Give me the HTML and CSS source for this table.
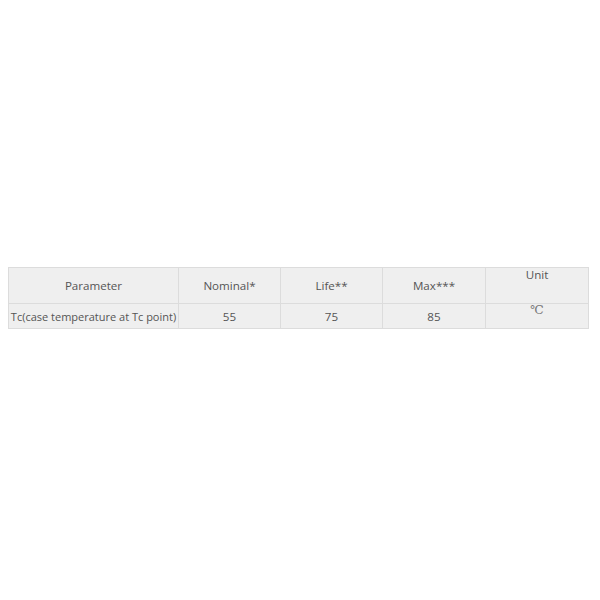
FILE: index.html
```html
<!DOCTYPE html>
<html>
<head>
<meta charset="utf-8">
<link rel="stylesheet" href="styles.css">
</head>
<body>
<div class="page">
<table class="spec">
<colgroup>
<col class="w-param">
<col class="w-num">
<col class="w-num">
<col class="w-max">
<col class="w-unit">
</colgroup>
<tr class="head">
<td>Parameter</td>
<td>Nominal*</td>
<td>Life**</td>
<td>Max***</td>
<td class="top">Unit</td>
</tr>
<tr class="body">
<td class="tc">Tc(case temperature at Tc point)</td>
<td>55</td>
<td>75</td>
<td>85</td>
<td class="top unit-val"><span class="deg">℃</span></td>
</tr>
</table>
</div>
</body>
</html>
```
FILE: styles.css
```css
html, body {
  margin: 0;
  padding: 0;
  background: #ffffff;
}
.page {
  padding: 267px 12px 0 8px;
}
.spec {
  width: 580px;
  border-collapse: collapse;
  table-layout: fixed;
  font-family: "Open Sans", "Noto Sans", sans-serif;
  font-size: 11.6px;
  color: #555555;
  background: #efefef;
}
.w-param { width: 170px; }
.w-num { width: 102px; }
.w-max { width: 103px; }
.w-unit { width: 103px; }
.spec td {
  border: 1px solid #dcdcdc;
  text-align: center;
  vertical-align: middle;
  padding: 0;
  white-space: nowrap;
}
.spec td.tc {
  font-size: 11px;
}
.head td {
  height: 35px;
}
.body td {
  height: 24px;
}
.spec td.top {
  vertical-align: top;
}
.head td.top {
  line-height: 14px;
}
.body td.unit-val {
  line-height: 12px;
}
.deg {
  display: inline-block;
  margin-top: -2px;
  font-family: "Liberation Serif", "DejaVu Serif", serif;
  font-size: 12px;
  line-height: 12px;
  color: #777777;
}
```
